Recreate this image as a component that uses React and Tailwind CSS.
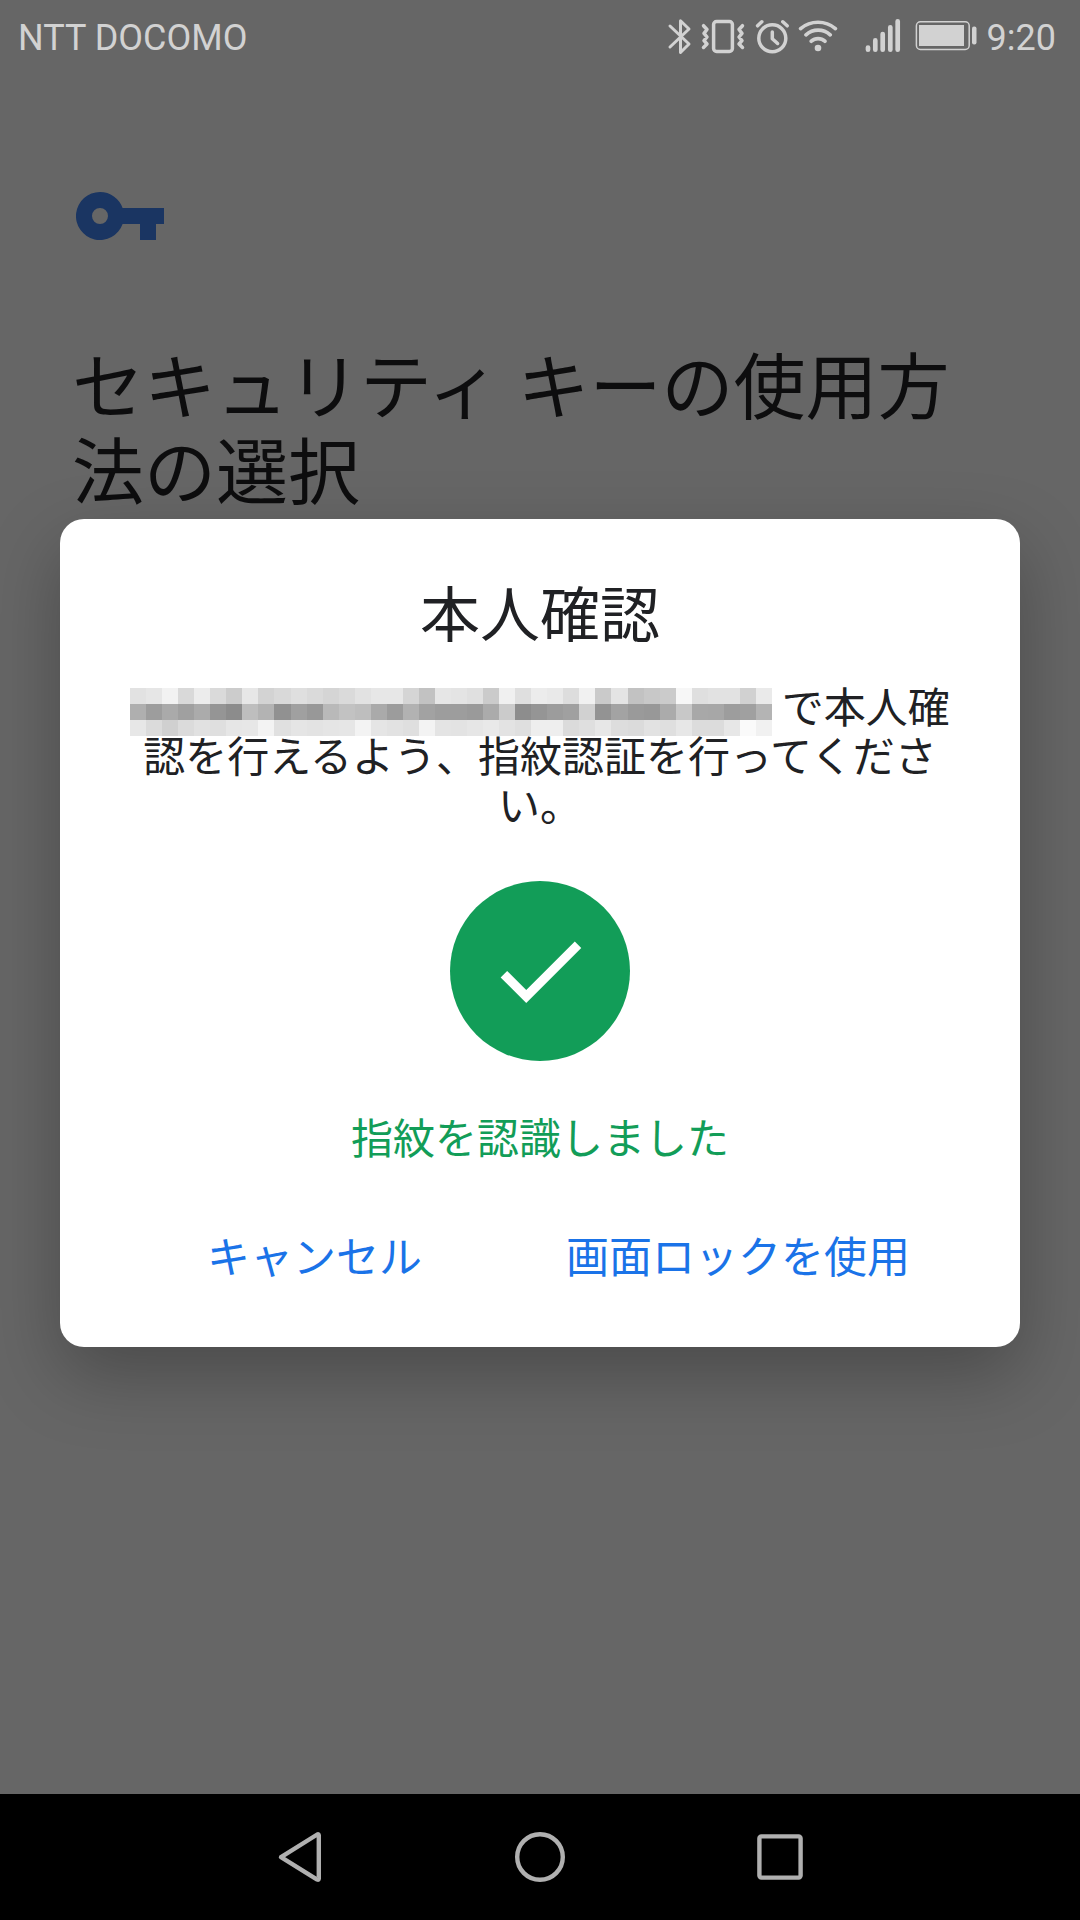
const MOSAIC_ROWS = [
  "e2e6f2d9ecdacce7d3d9dfdad5dae2e7e7d5c2e6e4e0cbf0dfece9ddf1cae4c2c8cbf7dfe2e2d1ea",
  "af9daaa0ab958cbeb391a098b9c2beaa9cb2a29d9d9aabcb8d959ca0d193a39a98abc8a8a79da0b4",
  "e7dbd0dbe1dfe6e7f3e0e5e3e5e6f3e5e2dff3e4e3e6e9e3dfeeeedbdfe7dddbe2dfe7dcdce7faf1",
].map((row) => row.match(/../g));

function Mosaic() {
  return (
    <svg
      className="-mb-2 mt-2 inline-block h-12 w-[642px] align-top"
      viewBox="0 0 40 3"
      preserveAspectRatio="none"
      shapeRendering="crispEdges"
      aria-hidden="true"
    >
      {MOSAIC_ROWS.map((row, y) =>
        row.map((tone, x) => (
          <rect key={`${x}-${y}`} x={x} y={y} width="1" height="1" fill={`#${tone}${tone}${tone}`} />
        ))
      )}
    </svg>
  );
}

function StatusBar() {
  return (
    <header className="flex h-[72px] items-center justify-between pl-[18px] pr-6 font-['Roboto',sans-serif] text-[36px] leading-[42px] text-[#d2d2d2]">
      <span className="pt-1">NTT DOCOMO</span>
      <div className="flex items-center gap-1.5">
        <svg className="h-[72px] w-8" viewBox="662 0 32 72" fill="none" stroke="currentColor" strokeWidth="3" strokeLinecap="round" strokeLinejoin="round" aria-label="Bluetooth">
          <path d="M670 26L689 44L680.5 52.5V20.7L689 29L670 47" />
        </svg>
        <svg className="h-[72px] w-[46px]" viewBox="700 0 46 72" fill="none" stroke="currentColor" strokeWidth="3.5" strokeLinecap="round" strokeLinejoin="round" aria-label="Vibrate">
          <rect x="713.6" y="21.6" width="18.8" height="29.8" rx="3" />
          <path d="M703.5 25.7L707 29.5L704 33.3L707 37L704 40.6L707 44L703.5 47.5M742.5 25.7L739 29.5L742 33.3L739 37L742 40.6L739 44L742.5 47.5" />
        </svg>
        <svg className="h-[72px] w-10" viewBox="752 0 40 72" fill="none" stroke="currentColor" strokeWidth="3.5" strokeLinecap="round" strokeLinejoin="round" aria-label="Alarm">
          <circle cx="772.3" cy="38.2" r="13.5" />
          <path d="M772.3 32V38.7L777.6 43.5" />
          <path d="M757.6 25.8L761.8 21.8M782.8 21.8L787.2 25.8" />
        </svg>
        <svg className="h-[72px] w-10" viewBox="798 0 40 72" fill="none" stroke="currentColor" strokeWidth="3.7" strokeLinecap="round" aria-label="Wi-Fi">
          <path d="M800.6 28.6A27 27 0 0 1 835.4 28.6M806 34.8A18 18 0 0 1 830.2 34.8M811.3 41.2A10 10 0 0 1 824.9 41.2" />
          <circle cx="818" cy="48" r="3.3" fill="currentColor" stroke="none" />
        </svg>
        <svg className="h-[72px] w-[62px]" viewBox="844 0 62 72" fill="none" stroke="currentColor" strokeWidth="4.7" strokeLinecap="round" aria-label="Signal">
          <path d="M868 47.6V49.7M875.3 40.4V49.7M882.7 34V49.7M890.3 27.3V49.7M897.7 21.3V49.7" />
        </svg>
        <svg className="h-[72px] w-[69px]" viewBox="912 0 69 72" fill="currentColor" aria-label="Battery">
          <rect x="916.4" y="21.8" width="52.8" height="27.6" rx="4" fill="none" stroke="currentColor" strokeWidth="1.5" />
          <rect x="919" y="25" width="45" height="21" />
          <rect x="972" y="26.5" width="4.5" height="18" rx="2" />
        </svg>
        <span className="pt-1">9:20</span>
      </div>
    </header>
  );
}

function Dialog() {
  return (
    <section
      role="dialog"
      aria-modal="true"
      aria-labelledby="dialog-title"
      className="w-full rounded-3xl bg-white px-[66px] pb-[68px] pt-[60px] text-center text-[42px] leading-[49px] text-[#202124] shadow-[0_28px_72px_rgba(0,0,0,0.27)]"
    >
      <h2 id="dialog-title" className="text-[60px] leading-[64px]">本人確認</h2>
      <p className="mt-[37px]">
        <Mosaic /> で本人確認を行えるよう、指紋認証を行ってください。
      </p>
      <div className="mx-auto mt-[54px] flex size-[180px] items-center justify-center rounded-full bg-[#129d58]">
        <svg className="size-[110px] fill-white" viewBox="0 0 24 24" aria-hidden="true">
          <path d="M9 16.17L4.83 12L3.41 13.41L9 19L21 7L19.59 5.59Z" />
        </svg>
      </div>
      <p role="status" className="mt-[50px] text-[#129d58]">指紋を認識しました</p>
      <div className="mt-[70px] flex justify-end gap-[144px] pr-11 text-[43px] text-[#1a73e8]">
        <button type="button">キャンセル</button>
        <button type="button">画面ロックを使用</button>
      </div>
    </section>
  );
}

function NavBar() {
  return (
    <nav className="flex h-[126px] items-center justify-center bg-black text-[#b0b0b0]">
      <button type="button" aria-label="戻る" className="flex h-full w-60 items-center justify-center">
        <svg className="size-[54px]" viewBox="273 1830 54 54" fill="none" stroke="currentColor" strokeWidth="4.4" strokeLinejoin="round" aria-hidden="true">
          <path d="M281 1857.2L317.2 1834.5Q318.8 1833.8 318.8 1835.5V1878.6Q318.8 1880.3 317.2 1879.6Z" />
        </svg>
      </button>
      <button type="button" aria-label="ホーム" className="flex h-full w-60 items-center justify-center">
        <svg className="size-[54px]" viewBox="0 0 54 54" fill="none" stroke="currentColor" strokeWidth="4.4" aria-hidden="true">
          <circle cx="27" cy="27" r="22.8" />
        </svg>
      </button>
      <button type="button" aria-label="最近使用したアプリ" className="flex h-full w-60 items-center justify-center">
        <svg className="size-[54px]" viewBox="0 0 54 54" fill="none" stroke="currentColor" strokeWidth="4.4" aria-hidden="true">
          <rect x="6.4" y="6.4" width="41.2" height="41.2" rx="2" />
        </svg>
      </button>
    </nav>
  );
}

export default function App() {
  return (
    <div lang="ja" className="flex min-h-screen flex-col bg-[#666666] font-['Noto_Sans_CJK_JP',sans-serif]">
      <StatusBar />
      <main className="relative flex-1">
        <div className="px-[72px] pt-[120px]">
          <svg className="ml-1 h-12 w-[88px] fill-[#1a3562]" viewBox="0 0 88 48" aria-hidden="true">
            <path fillRule="evenodd" d="M24 0A24 24 0 0 1 46.6 16H88V32H80V48H64V32H46.6A24 24 0 1 1 24 0ZM24 16A8 8 0 1 0 24 32A8 8 0 1 0 24 16Z" />
          </svg>
          <h1 className="mt-[106px] font-['Roboto','Noto_Sans_CJK_JP',sans-serif] text-[72px] leading-[85px] text-[#0d0d0e]">
            セキュリティ キーの使用方法の選択
          </h1>
        </div>
        <div className="absolute inset-0 flex items-center px-[60px]">
          <Dialog />
        </div>
      </main>
      <NavBar />
    </div>
  );
}
